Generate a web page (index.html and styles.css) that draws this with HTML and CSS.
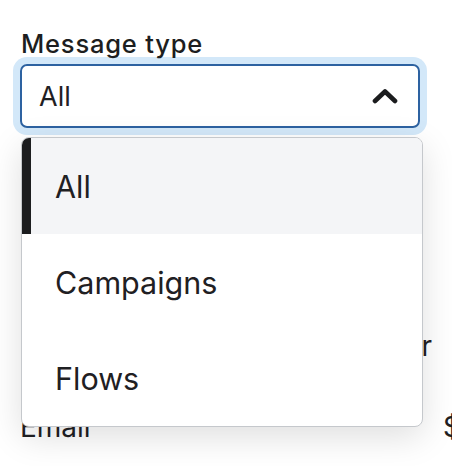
FILE: index.html
```html
<!DOCTYPE html>
<html>
<head>
<meta charset="utf-8">
<link rel="stylesheet" href="styles.css">
</head>
<body>
<div class="page">
  <div class="field">
    <label class="label">Message type</label>
    <div class="select">
      <span class="select-value">All</span>
      <svg class="chevron" width="26" height="16" viewBox="0 0 26 16"><path d="M3 13 L13 3.5 L23 13" fill="none" stroke="#1b1c1e" stroke-width="4.6" stroke-linecap="round" stroke-linejoin="round"/></svg>
    </div>
    <ul class="menu">
      <li class="item active">All</li>
      <li class="item">Campaigns</li>
      <li class="item">Flows</li>
    </ul>
  </div>
  <div class="table">
    <div class="row head"><span></span><span class="col-end">Order</span></div>
    <div class="row"><span>Email</span><span class="col-money">$1,204</span></div>
  </div>
</div>
</body>
</html>
```

FILE: styles.css
```css
html, body {
  margin: 0;
  padding: 0;
  background: #ffffff;
  overflow: hidden;
}
body {
  width: 452px;
  height: 466px;
  font-family: Inter, "Noto Sans", sans-serif;
  color: #1f2023;
}
.page {
  padding: 29px 0 0 20px;
}
.field {
  position: relative;
  width: 400px;
}
.label {
  display: block;
  font-size: 25.5px;
  font-weight: 500;
  letter-spacing: 0.8px;
  line-height: 30px;
  margin-left: 1px;
  margin-bottom: 5px;
  color: #1d1e20;
}
.select {
  box-sizing: border-box;
  height: 64px;
  border: 2px solid #2d62a1;
  border-radius: 7px;
  box-shadow: 0 0 0 7px #d3e8f9;
  display: flex;
  align-items: center;
  justify-content: space-between;
  padding: 0 20px 0 17px;
}
.select-value {
  font-size: 27px;
  color: #1f2023;
}
.chevron {
  display: block;
}
.menu {
  position: absolute;
  top: 108px;
  left: 1px;
  width: 402px;
  box-sizing: border-box;
  margin: 0;
  padding: 0;
  list-style: none;
  background: #fff;
  border: 1px solid #c5c8cc;
  border-radius: 8px;
  overflow: hidden;
  box-shadow: 0 10px 34px rgba(0, 0, 0, 0.13);
  z-index: 2;
}
.item {
  height: 96px;
  display: flex;
  align-items: center;
  padding-left: 33px;
  font-size: 30.5px;
  color: #1f2023;
}
.item.active {
  background: #f4f5f7;
  border-left: 9px solid #1c1d1f;
  padding-left: 24px;
}
.table {
  margin-top: 151px;
  width: 432px;
}
.row {
  display: flex;
  font-size: 28px;
  height: 81px;
  align-items: flex-end;
  line-height: 1;
}
.row > span:first-child {
  flex: 1;
}
.col-end {
  padding-right: 20px;
  white-space: nowrap;
}
.col-money {
  width: 9px;
  white-space: nowrap;
}
```
